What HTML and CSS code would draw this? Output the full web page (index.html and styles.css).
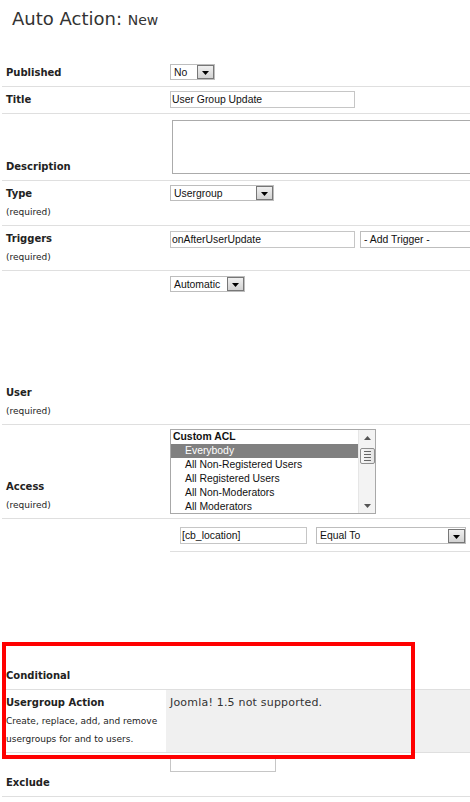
FILE: index.html
```html
<!DOCTYPE html>
<html lang="en">
<head>
<meta charset="utf-8">
<title>Auto Action: New</title>
<link rel="stylesheet" href="styles.css">
</head>
<body>
<div class="page">
  <div class="header">
    <h1 class="title">Auto Action: <small class="subtitle">New</small></h1>
  </div>

  <table class="form">
    <tr>
      <td class="label"><span class="lbl">Published</span></td>
      <td class="value">
        <div class="select w-no"><span class="sv">No</span><span class="sbtn"><svg width="7" height="4" viewBox="0 0 7 4"><path d="M0 0H7L3.5 4Z" fill="#000"/></svg></span></div>
      </td>
    </tr>
    <tr>
      <td class="label"><span class="lbl">Title</span></td>
      <td class="value"><input class="inp w-title" type="text" value="User Group Update"></td>
    </tr>
    <tr>
      <td class="label"><span class="lbl">Description</span></td>
      <td class="value"><textarea class="area"></textarea></td>
    </tr>
    <tr>
      <td class="label"><span class="lbl">Type</span><span class="req">(required)</span></td>
      <td class="value">
        <div class="select w-type"><span class="sv">Usergroup</span><span class="sbtn"><svg width="7" height="4" viewBox="0 0 7 4"><path d="M0 0H7L3.5 4Z" fill="#000"/></svg></span></div>
      </td>
    </tr>
    <tr>
      <td class="label"><span class="lbl">Triggers</span><span class="req">(required)</span></td>
      <td class="value">
        <div class="pair">
          <input class="inp w-title" type="text" value="onAfterUserUpdate">
          <div class="select w-trig"><span class="sv">- Add Trigger -</span></div>
        </div>
      </td>
    </tr>
    <tr>
      <td class="label"><span class="lbl">User</span><span class="req">(required)</span></td>
      <td class="value">
        <div class="tall-user">
          <div class="select w-auto nudge"><span class="sv">Automatic</span><span class="sbtn"><svg width="7" height="4" viewBox="0 0 7 4"><path d="M0 0H7L3.5 4Z" fill="#000"/></svg></span></div>
        </div>
      </td>
    </tr>
    <tr>
      <td class="label"><span class="lbl">Access</span><span class="req">(required)</span></td>
      <td class="value">
        <div class="listbox">
          <div class="options">
            <div class="optgroup">Custom ACL</div>
            <div class="opt selected">Everybody</div>
            <div class="opt">All Non-Registered Users</div>
            <div class="opt">All Registered Users</div>
            <div class="opt">All Non-Moderators</div>
            <div class="opt">All Moderators</div>
          </div>
          <div class="scrollbar">
            <svg class="arr-up" width="7" height="4" viewBox="0 0 7 4"><path d="M0 4H7L3.5 0Z" fill="#555"/></svg>
            <div class="thumb"><span></span><span></span><span></span><span></span></div>
            <svg class="arr-down" width="7" height="4" viewBox="0 0 7 4"><path d="M0 0H7L3.5 4Z" fill="#555"/></svg>
          </div>
        </div>
      </td>
    </tr>
    <tr>
      <td class="label"><span class="lbl">Conditional</span></td>
      <td class="value">
        <div class="tall-cond">
          <table class="cond">
            <tr>
              <td class="cond-field"><input class="inp w-field" type="text" value="[cb_location]"></td>
              <td class="cond-op">
                <div class="select w-eq"><span class="sv">Equal To</span><span class="sbtn"><svg width="7" height="4" viewBox="0 0 7 4"><path d="M0 0H7L3.5 4Z" fill="#000"/></svg></span></div>
              </td>
            </tr>
          </table>
        </div>
      </td>
    </tr>
    <tr>
      <td class="label top">
        <span class="lbl">Usergroup Action</span>
        <span class="desc">Create, replace, add, and remove usergroups for and to users.</span>
      </td>
      <td class="value shaded"><span class="note">Joomla! 1.5 not supported.</span></td>
    </tr>
    <tr>
      <td class="label"><span class="lbl">Exclude</span></td>
      <td class="value">
        <div class="tall-excl"><input class="inp w-excl" type="text" value=""></div>
      </td>
    </tr>
  </table>

  <div class="highlight-box"></div>
</div>
</body>
</html>
```

FILE: styles.css
```css
html, body {
  margin: 0;
  padding: 0;
  overflow: hidden;
  background: #fff;
}

.page {
  position: relative;
  width: 540px;
  font-family: "DejaVu Sans", Verdana, sans-serif;
  color: #222;
}

.header {
  height: 60px;
  box-sizing: border-box;
  padding: 7px 0 0 12px;
}

.title {
  margin: 0;
  font-weight: normal;
  font-size: 18px;
  line-height: 24px;
  color: #333;
}

.subtitle {
  font-size: 14px;
  color: #333;
}

.form {
  margin-left: 2px;
  width: 530px;
  border-collapse: collapse;
}

.form > tbody > tr > td {
  border-bottom: 1px solid #dfdfdf;
  padding: 4px;
}

.label {
  width: 156px;
  vertical-align: bottom;
}

.label.top {
  vertical-align: top;
}

.value {
  vertical-align: top;
}

.lbl {
  display: block;
  font-size: 10px;
  font-weight: bold;
  line-height: 18px;
  color: #222;
}

.req {
  display: block;
  font-size: 9px;
  line-height: 18px;
  color: #222;
}

.desc {
  display: block;
  font-size: 9px;
  line-height: 18px;
  color: #222;
}

.shaded {
  background: #f0f0f0;
}

.note {
  display: block;
  font-size: 11px;
  line-height: 18px;
  letter-spacing: 0.2px;
  color: #333;
}

/* form controls */
.inp {
  display: block;
  box-sizing: border-box;
  height: 17px;
  margin: 0;
  padding: 0 1px;
  border: 1px solid #c6c6c6;
  background: #fff;
  font-family: "Liberation Sans", Arial, sans-serif;
  font-size: 10.4px;
  color: #111;
  outline: none;
}

.w-title { width: 185px; }
.w-field { width: 127px; }
.w-excl { width: 106px; }

.area {
  display: block;
  box-sizing: border-box;
  width: 320px;
  height: 54px;
  margin: 2px 0 2px 2px;
  border: 1px solid #ababab;
  resize: none;
  background: #fff;
}

.select {
  display: flex;
  align-items: center;
  box-sizing: border-box;
  height: 16px;
  border: 1px solid #bdbdbd;
  background: #fff;
  font-family: "Liberation Sans", Arial, sans-serif;
  font-size: 10.4px;
  color: #111;
}

.sv {
  flex: 1;
  padding-left: 3px;
  white-space: nowrap;
  overflow: hidden;
}

.sbtn {
  display: flex;
  align-items: flex-end;
  justify-content: center;
  box-sizing: border-box;
  width: 17px;
  height: 14px;
  padding-bottom: 3px;
  border: 1px solid #777;
  background: linear-gradient(#f0f0f0, #d2d2d2);
}

.w-no { width: 45px; }
.w-type { width: 104px; }
.w-auto { width: 75px; }
.w-trig { width: 140px; height: 17px; }
.w-eq { width: 150px; height: 17px; }

.pair {
  display: flex;
  gap: 5px;
  margin-top: 1px;
}

.nudge { margin-top: 1px; }

.tall-user { height: 144px; }
.tall-cond { height: 162px; }
.tall-excl { height: 37px; margin-top: -2px; }

/* listbox */
.listbox {
  display: flex;
  box-sizing: border-box;
  width: 206px;
  height: 85px;
  border: 1px solid #a8a8a8;
  background: #fff;
  font-family: "Liberation Sans", Arial, sans-serif;
  font-size: 10.4px;
  color: #111;
  overflow: hidden;
}

.options {
  flex: 1;
}

.optgroup {
  font-weight: bold;
  line-height: 14px;
  padding-left: 2px;
}

.opt {
  line-height: 14px;
  padding-left: 14px;
  white-space: nowrap;
}

.opt.selected {
  background: #808080;
  color: #fff;
}

.scrollbar {
  width: 16px;
  background: #f3f3f3;
  border-left: 1px solid #e6e6e6;
  display: flex;
  flex-direction: column;
  align-items: center;
}

.arr-up {
  margin-top: 6px;
}

.thumb {
  box-sizing: border-box;
  width: 15px;
  height: 16px;
  margin-top: 8px;
  border: 1px solid #8e8e8e;
  border-radius: 2px;
  background: linear-gradient(90deg, #f7f7f7, #e4e4e4);
  display: flex;
  flex-direction: column;
  align-items: center;
  justify-content: center;
  gap: 2px;
}

.thumb span {
  display: block;
  width: 7px;
  height: 1px;
  background: #666;
}

.arr-down {
  margin-top: auto;
  margin-bottom: 5px;
}

/* nested condition table */
.cond {
  border-collapse: collapse;
  width: 100%;
}

.cond td {
  padding: 4px 0 7px 0;
  border-bottom: 1px solid #dfdfdf;
  vertical-align: top;
}

.cond td.cond-field {
  width: 127px;
  padding-left: 10px;
}

.cond td.cond-op {
  padding-left: 9px;
}

/* annotation overlay */
.highlight-box {
  position: absolute;
  left: 2px;
  top: 642px;
  width: 413px;
  height: 117px;
  box-sizing: border-box;
  border: 4px solid #ff0000;
  pointer-events: none;
}
```
